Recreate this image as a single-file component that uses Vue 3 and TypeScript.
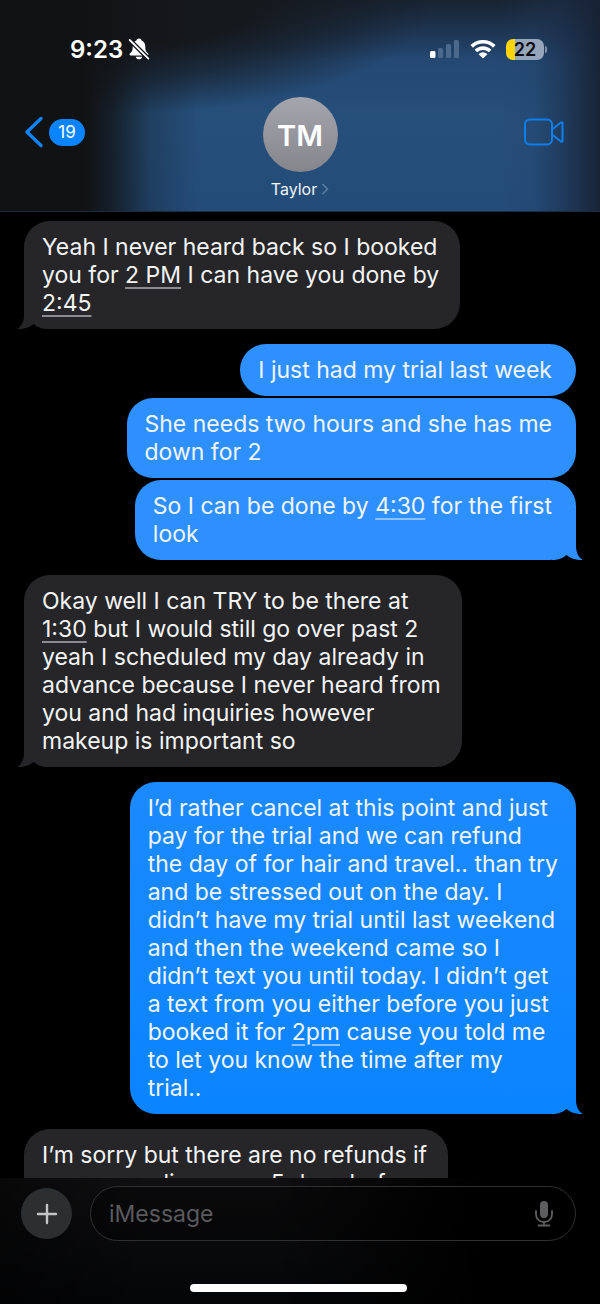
<script setup lang="ts">
interface Part {
  text: string
  link?: boolean
}
interface Message {
  id: number
  side: 'in' | 'out'
  tone: string
  tail: boolean
  lines: Part[][]
}

const plain = (...rows: string[]): Part[][] => rows.map((text) => [{ text }])

const messages: Message[] = [
  {
    id: 1,
    side: 'in',
    tone: 'gray',
    tail: true,
    lines: [
      [{ text: 'Yeah I never heard back so I booked' }],
      [{ text: 'you for ' }, { text: '2 PM', link: true }, { text: ' I can have you done by' }],
      [{ text: '2:45', link: true }],
    ],
  },
  { id: 2, side: 'out', tone: 'sky', tail: false, lines: plain('I just had my trial last week') },
  { id: 3, side: 'out', tone: 'sky', tail: false, lines: plain('She needs two hours and she has me', 'down for 2') },
  {
    id: 4,
    side: 'out',
    tone: 'sky',
    tail: true,
    lines: [
      [{ text: 'So I can be done by ' }, { text: '4:30', link: true }, { text: ' for the first' }],
      [{ text: 'look' }],
    ],
  },
  {
    id: 5,
    side: 'in',
    tone: 'gray',
    tail: true,
    lines: [
      [{ text: 'Okay well I can TRY to be there at' }],
      [{ text: '1:30', link: true }, { text: ' but I would still go over past 2' }],
      ...plain(
        'yeah I scheduled my day already in',
        'advance because I never heard from',
        'you and had inquiries however',
        'makeup is important so',
      ),
    ],
  },
  {
    id: 6,
    side: 'out',
    tone: 'azure',
    tail: true,
    lines: [
      ...plain(
        'I’d rather cancel at this point and just',
        'pay for the trial and we can refund',
        'the day of for hair and travel.. than try',
        'and be stressed out on the day. I',
        'didn’t have my trial until last weekend',
        'and then the weekend came so I',
        'didn’t text you until today. I didn’t get',
        'a text from you either before you just',
      ),
      [{ text: 'booked it for ' }, { text: '2pm', link: true }, { text: ' cause you told me' }],
      ...plain('to let you know the time after my', 'trial..'),
    ],
  },
  {
    id: 7,
    side: 'in',
    tone: 'gray',
    tail: false,
    lines: plain('I’m sorry but there are no refunds if', 'your canceling more 5 days before'),
  },
]

const startsGroup = (i: number) => i > 0 && messages[i].side !== messages[i - 1].side
</script>

<template>
  <div class="phone">
    <header class="top">
      <div class="status">
        <div class="clock">
          <span>9:23</span>
          <svg width="22" height="24" viewBox="0 0 22 24" aria-label="Silent">
            <path d="M11 1.500c-1.500 0-2.400.8-2.600 2C5.800 4.500 4.700 7 4.700 10c0 3.700-.8 4.700-2.600 6.200-1 .9-.7 2.200.8 2.200h16.200c1.500 0 1.800-1.300.8-2.200-1.800-1.500-2.600-2.500-2.600-6.200 0-3-1.100-5.500-3.700-6.500-.2-1.200-1.100-2-2.600-2z" fill="#fff" />
            <path d="M7.700 19.700h6.600c-.5 1.700-1.700 2.600-3.300 2.600s-2.800-.9-3.300-2.600z" fill="#fff" />
            <path d="M1 2.300 21 22.200" stroke="#12161c" stroke-width="4.600" />
            <path d="M1.700 3 20.400 21.600" stroke="#fff" stroke-width="1.800" stroke-linecap="round" />
          </svg>
        </div>
        <div class="indicators">
          <svg width="30" height="20" viewBox="0 0 30 20" aria-label="Signal">
            <rect x="0" y="12" width="5.500" height="7" rx="1.500" fill="#fff" />
            <rect x="8" y="9" width="5" height="10" rx="1.500" fill="#4b698d" />
            <rect x="16" y="5" width="5" height="14" rx="1.500" fill="#4b698d" />
            <rect x="24" y="1" width="5" height="18" rx="1.500" fill="#4b698d" />
          </svg>
          <svg width="26" height="20" viewBox="0 0 26 20" aria-label="Wi-Fi">
            <g fill="none" stroke="#fff" stroke-width="3.700">
              <path d="M1.700 7.400a16 16 0 0 1 22.600 0" />
              <path d="M5.900 12a10 10 0 0 1 14.200 0" />
            </g>
            <path d="M13 19.500 8.600 15.200a6.200 6.200 0 0 1 8.800 0z" fill="#fff" />
          </svg>
          <div class="battery"><span class="cell">22</span><i class="nub"></i></div>
        </div>
      </div>
      <nav class="bar">
        <button class="back" type="button" aria-label="Back, 19 unread">
          <svg width="20" height="32" viewBox="0 0 20 32"><path d="M17 2.500 3 16l14 13.500" fill="none" stroke="#0f84fb" stroke-width="3.400" stroke-linecap="round" stroke-linejoin="round" /></svg>
          <span class="count">19</span>
        </button>
        <button class="contact" type="button">
          <span class="avatar">TM</span>
          <span class="name">Taylor
            <svg width="8" height="12" viewBox="0 0 8 12"><path d="M1.500 1 6.500 6l-5 5" fill="none" stroke="#5d7fa3" stroke-width="1.500" /></svg>
          </span>
        </button>
        <button class="video" type="button" aria-label="Video call">
          <svg width="42" height="28" viewBox="0 0 42 28" fill="none" stroke="#0f7ff0" stroke-width="2" stroke-linejoin="round">
            <rect x="2" y="1.500" width="27" height="25" rx="5" />
            <path d="M29 11.500 38 4.500q1.500-1 1.500.8v17.400q0 1.800-1.500.8L29 16.500" />
          </svg>
        </button>
      </nav>
    </header>

    <main class="thread">
      <div
        v-for="(m, i) in messages"
        :key="m.id"
        class="row"
        :class="[m.side, { group: startsGroup(i) }]"
      >
        <div class="bubble" :class="m.tone">
          <div v-for="(line, n) in m.lines" :key="n" class="line">
            <template v-for="(part, p) in line" :key="p">
              <a v-if="part.link" href="#">{{ part.text }}</a>
              <template v-else>{{ part.text }}</template>
            </template>
          </div>
        </div>
        <svg v-if="m.tail" class="tail" :class="m.tone" width="32" height="26" viewBox="0 0 32 26" aria-hidden="true">
          <path d="M8 0V12C8 19 5 24 1 26C9 26 14 24 17.500 21C22 25 27 26 32 26V0Z" />
        </svg>
      </div>
    </main>

    <footer class="bottom">
      <form class="compose" @submit.prevent>
        <button class="add" type="button" aria-label="Add">
          <svg width="22" height="22" viewBox="0 0 22 22"><path d="M11 2v18M2 11h18" stroke="#c2c4c5" stroke-width="2.400" stroke-linecap="round" /></svg>
        </button>
        <div class="field">
          <input type="text" placeholder="iMessage" aria-label="iMessage" />
          <button class="mic" type="button" aria-label="Dictate">
            <svg width="20" height="28" viewBox="0 0 20 28">
              <rect x="6" y="1" width="8" height="17" rx="4" fill="#5e5e60" />
              <path d="M2 11v3.500a8 7.500 0 0 0 16 0V11M10 22v3.500M4.500 25.500h11" fill="none" stroke="#5e5e60" stroke-width="1.800" stroke-linecap="round" />
            </svg>
          </button>
        </div>
      </form>
      <div class="home"></div>
    </footer>
  </div>
</template>

<style>
body {
  margin: 0;
  background: #000;
}
</style>

<style scoped>
.phone {
  display: flex;
  flex-direction: column;
  height: 100vh;
  overflow: hidden;
  background: #000;
  color: #f4f4f6;
  font-family: Inter, "Liberation Sans", sans-serif;
}
button {
  padding: 0;
  border: 0;
  background: none;
  color: inherit;
  font-family: inherit;
}
svg {
  display: block;
}
.top {
  flex: none;
  box-sizing: border-box;
  height: 212px;
  padding: 32px 24px 0;
  border-bottom: 1px solid #1b2c40;
  background:
    linear-gradient(90deg, #111213 0%, #111213 14%, rgba(17, 18, 19, 0.75) 19%, rgba(17, 18, 19, 0.25) 25%, rgba(17, 18, 19, 0) 33%),
    linear-gradient(270deg, rgba(23, 34, 51, 0.95) 0%, rgba(28, 46, 72, 0.6) 6%, rgba(32, 62, 95, 0.2) 11%, rgba(35, 75, 115, 0) 17%),
    radial-gradient(ellipse 52% 54% at 20% 0%, #15181c 0%, #15181c 40%, rgba(21, 24, 28, 0.6) 68%, rgba(21, 24, 28, 0) 100%),
    linear-gradient(180deg, rgba(20, 22, 26, 0.7) 0%, rgba(20, 22, 26, 0) 28%),
    linear-gradient(180deg, #22416a 0%, #264f7a 55%, #244c7a 100%);
}
.status {
  display: flex;
  justify-content: space-between;
  align-items: center;
  height: 34px;
  padding: 0 29px 0 46px;
}
.clock,
.indicators {
  display: flex;
  align-items: center;
}
.clock {
  gap: 5px;
  color: #fff;
  font-size: 24px;
  font-weight: 600;
}
.indicators {
  gap: 10px;
}
.battery {
  display: flex;
  align-items: center;
  gap: 1px;
}
.cell {
  width: 38px;
  border-radius: 7px;
  background: linear-gradient(90deg, #fdd50f 0 9px, #95a5ba 9px);
  color: #0b0d12;
  font-size: 18px;
  font-weight: 600;
  line-height: 21px;
  text-align: center;
}
.nub {
  width: 2px;
  height: 7px;
  border-radius: 0 3px 3px 0;
  background: #8193aa;
}
.bar {
  display: grid;
  grid-template-columns: 1fr auto 1fr;
  align-items: start;
  padding-top: 31px;
}
.back {
  display: flex;
  align-items: center;
  gap: 5px;
  justify-self: start;
  margin-top: 19px;
}
.count {
  width: 36px;
  border-radius: 14px;
  background: #0a84ff;
  color: #fff;
  font-size: 17px;
  line-height: 27px;
  text-align: center;
}
.contact {
  display: flex;
  flex-direction: column;
  align-items: center;
  gap: 7px;
}
.avatar {
  width: 75px;
  height: 75px;
  border-radius: 50%;
  background: linear-gradient(180deg, #a5a5ae, #85858c);
  color: #fff;
  font-size: 29px;
  font-weight: 600;
  line-height: 77px;
  text-align: center;
}
.name {
  display: flex;
  align-items: center;
  gap: 4px;
  font-size: 16px;
  line-height: 20px;
}
.video {
  justify-self: end;
  margin: 21px 11px 0 0;
}
.thread {
  flex: 1;
  min-height: 0;
  overflow: hidden;
  padding: 9px 24px 0;
}
.row {
  position: relative;
  display: flex;
  margin-top: 2px;
  isolation: isolate;
}
.row:first-child {
  margin-top: 0;
}
.row.group {
  margin-top: 15px;
}
.row.out {
  justify-content: flex-end;
}
.bubble {
  padding: 12px 21px 12px 18px;
  border-radius: 26px;
  font-size: 23px;
  line-height: 28px;
}
.out .bubble {
  padding-right: 24px;
}
.out .azure {
  padding-right: 18px;
}
.line {
  white-space: pre;
}
.line a {
  color: inherit;
  text-decoration: underline;
  text-decoration-color: #8c8c90;
  text-decoration-thickness: 2px;
  text-underline-offset: 4px;
}
.bubble.gray {
  background: #262629;
}
.bubble.sky {
  background: #2e90ff;
}
.bubble.azure {
  background: linear-gradient(180deg, #1c8aff, #0a84ff);
}
.out a {
  text-decoration-color: #8cc2ff;
}
.tail {
  position: absolute;
  bottom: 0;
  left: -8px;
  z-index: -1;
}
.tail.gray {
  fill: #262629;
}
.tail.sky {
  fill: #2e90ff;
}
.tail.azure {
  fill: #0a84ff;
}
.out .tail {
  left: auto;
  right: -8px;
  transform: scaleX(-1);
}
.bottom {
  flex: none;
  box-sizing: border-box;
  height: 126px;
  padding: 8px 24px 0 21px;
  background: linear-gradient(90deg, rgba(0, 0, 0, 0.5), rgba(0, 0, 0, 0) 25%, rgba(0, 0, 0, 0) 45%, #000 80%), linear-gradient(180deg, #101012, #040507);
}
.compose {
  display: flex;
  align-items: center;
  gap: 18px;
}
.add {
  display: grid;
  place-items: center;
  width: 51px;
  height: 51px;
  border-radius: 50%;
  background: #2c2e2f;
}
.field {
  display: flex;
  flex: 1;
  align-items: center;
  box-sizing: border-box;
  height: 55px;
  padding: 0 21px 0 18px;
  border: 1px solid #303032;
  border-radius: 28px;
  background: rgba(0, 0, 0, 0.35);
}
.field input {
  flex: 1;
  min-width: 0;
  padding: 0;
  border: 0;
  outline: 0;
  background: none;
  color: #f4f4f6;
  font-family: inherit;
  font-size: 23px;
}
.field input::placeholder {
  color: #5a5a5d;
  opacity: 1;
}
.home {
  width: 39%;
  height: 8px;
  margin: 43px auto 0;
  border-radius: 4px;
  background: #fff;
}
</style>
